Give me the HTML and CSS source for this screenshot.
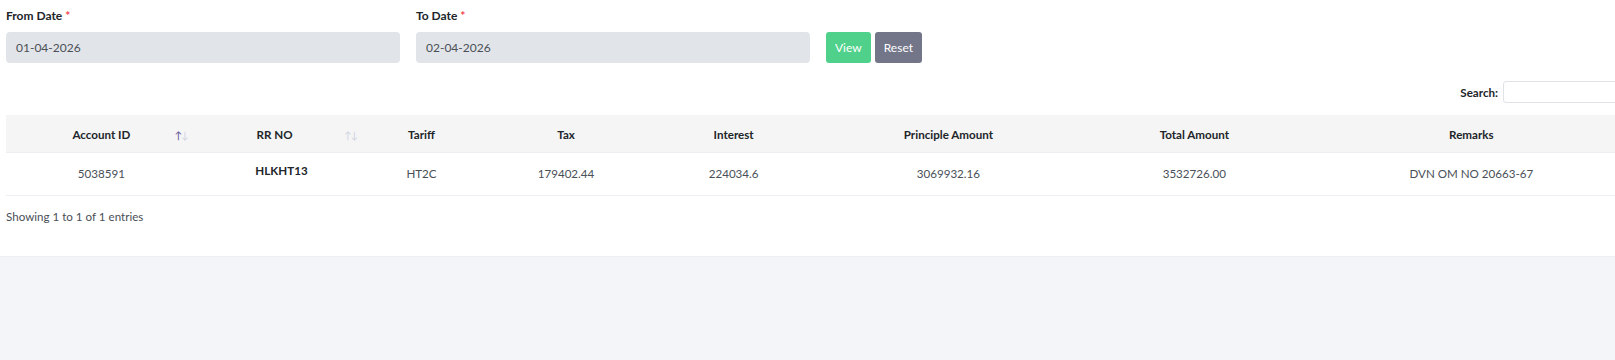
FILE: index.html
```html
<!DOCTYPE html>
<html lang="en">
<head>
  <meta charset="UTF-8" />
  <title>Arrear Report</title>
  <link rel="stylesheet" href="styles.css">
</head>
<body>
  <div class="card">
    <div class="filters">
      <div class="field">
        <label>From Date <span class="req">*</span></label>
        <input type="text" value="01-04-2026" readonly>
      </div>
      <div class="field">
        <label>To Date <span class="req">*</span></label>
        <input type="text" value="02-04-2026" readonly>
      </div>
      <div class="actions">
        <button class="btn view">View</button>
        <button class="btn reset">Reset</button>
      </div>
    </div>

    <div class="search-row">
      <label for="search">Search:</label>
      <input type="search" id="search">
    </div>

    <table class="tbl">
      <colgroup>
        <col style="width:190px">
        <col style="width:169px">
        <col style="width:110px">
        <col style="width:178px">
        <col style="width:156px">
        <col style="width:272px">
        <col style="width:218px">
        <col style="width:334px">
      </colgroup>
      <thead>
        <tr>
          <th class="sort">Account ID <span class="arrows"><i class="on">&uarr;</i><i>&darr;</i></span></th>
          <th class="sort rr-head">RR NO <span class="arrows"><i>&uarr;</i><i>&darr;</i></span></th>
          <th>Tariff</th>
          <th>Tax</th>
          <th>Interest</th>
          <th>Principle Amount</th>
          <th>Total Amount</th>
          <th>Remarks</th>
        </tr>
      </thead>
      <tbody>
        <tr>
          <td>5038591</td>
          <td><b class="rr">HLKHT13</b></td>
          <td>HT2C</td>
          <td>179402.44</td>
          <td>224034.6</td>
          <td>3069932.16</td>
          <td>3532726.00</td>
          <td>DVN OM NO 20663-67</td>
        </tr>
      </tbody>
    </table>

    <div class="info">Showing 1 to 1 of 1 entries</div>
  </div>
</body>
</html>
```

FILE: styles.css
```css
* {
  box-sizing: border-box;
  margin: 0;
  padding: 0;
}

html, body {
  font-family: Lato, "Open Sans", Arial, sans-serif;
  font-size: 11.6px;
  background: #f4f5f8;
  color: #495057;
  overflow: hidden;
}

.card {
  width: 1645px;
  height: 257px;
  background: #fff;
  padding: 9px 6px 0 6px;
  box-shadow: 0 1px 3px rgba(0,0,0,0.05);
  border-bottom: 1px solid #eceef2;
}

.filters {
  display: flex;
  align-items: flex-end;
}

.field {
  margin-right: 16px;
}

.field label {
  display: block;
  font-weight: 700;
  color: #212529;
  font-size: 12px;
  line-height: 14px;
  margin-bottom: 9px;
}

.req {
  color: #f1434e;
}

.field input {
  width: 394px;
  height: 31px;
  border: none;
  border-radius: 4px;
  background: #e1e4e8;
  color: #495057;
  font-family: inherit;
  font-size: 12px;
  padding: 0 10px;
  outline: none;
}

.actions {
  display: flex;
  gap: 4px;
}

.btn {
  height: 31px;
  border: none;
  border-radius: 3px;
  color: #fff;
  font-family: inherit;
  font-size: 12px;
  padding: 0 9px;
}

.btn.view { background: #4fd18b; }
.btn.reset { background: #737689; }

.search-row {
  display: flex;
  justify-content: flex-end;
  align-items: center;
  gap: 5px;
  margin-top: 18px;
}

.search-row label {
  font-weight: 700;
  color: #212529;
}

.search-row input {
  width: 136px;
  height: 22px;
  border: 1px solid #dfe3e8;
  border-radius: 3px;
  outline: none;
}

.tbl {
  margin-top: 12px;
  width: 100%;
  border-collapse: collapse;
  table-layout: fixed;
}

.tbl th {
  background: #f5f5f5;
  color: #212529;
  font-weight: 700;
  height: 37px;
  padding-top: 3px;
  text-align: center;
  position: relative;
  border-bottom: 1px solid #eceef1;
}

.tbl th.rr-head {
  padding-right: 14px;
}

.tbl td {
  height: 43px;
  text-align: center;
  border-bottom: 1px solid #eceef1;
}

.tbl .rr {
  color: #212529;
  position: relative;
  top: -3px;
}

.arrows {
  position: absolute;
  right: 8px;
  top: 15px;
  font-size: 10px;
  line-height: 10px;
  color: #cdd3e0;
  font-weight: 400;
}

.arrows i {
  font-style: normal;
  margin-left: -1px;
}

.arrows i.on {
  color: #5a4f8f;
}

.info {
  margin-top: 14px;
  color: #495057;
}
```
